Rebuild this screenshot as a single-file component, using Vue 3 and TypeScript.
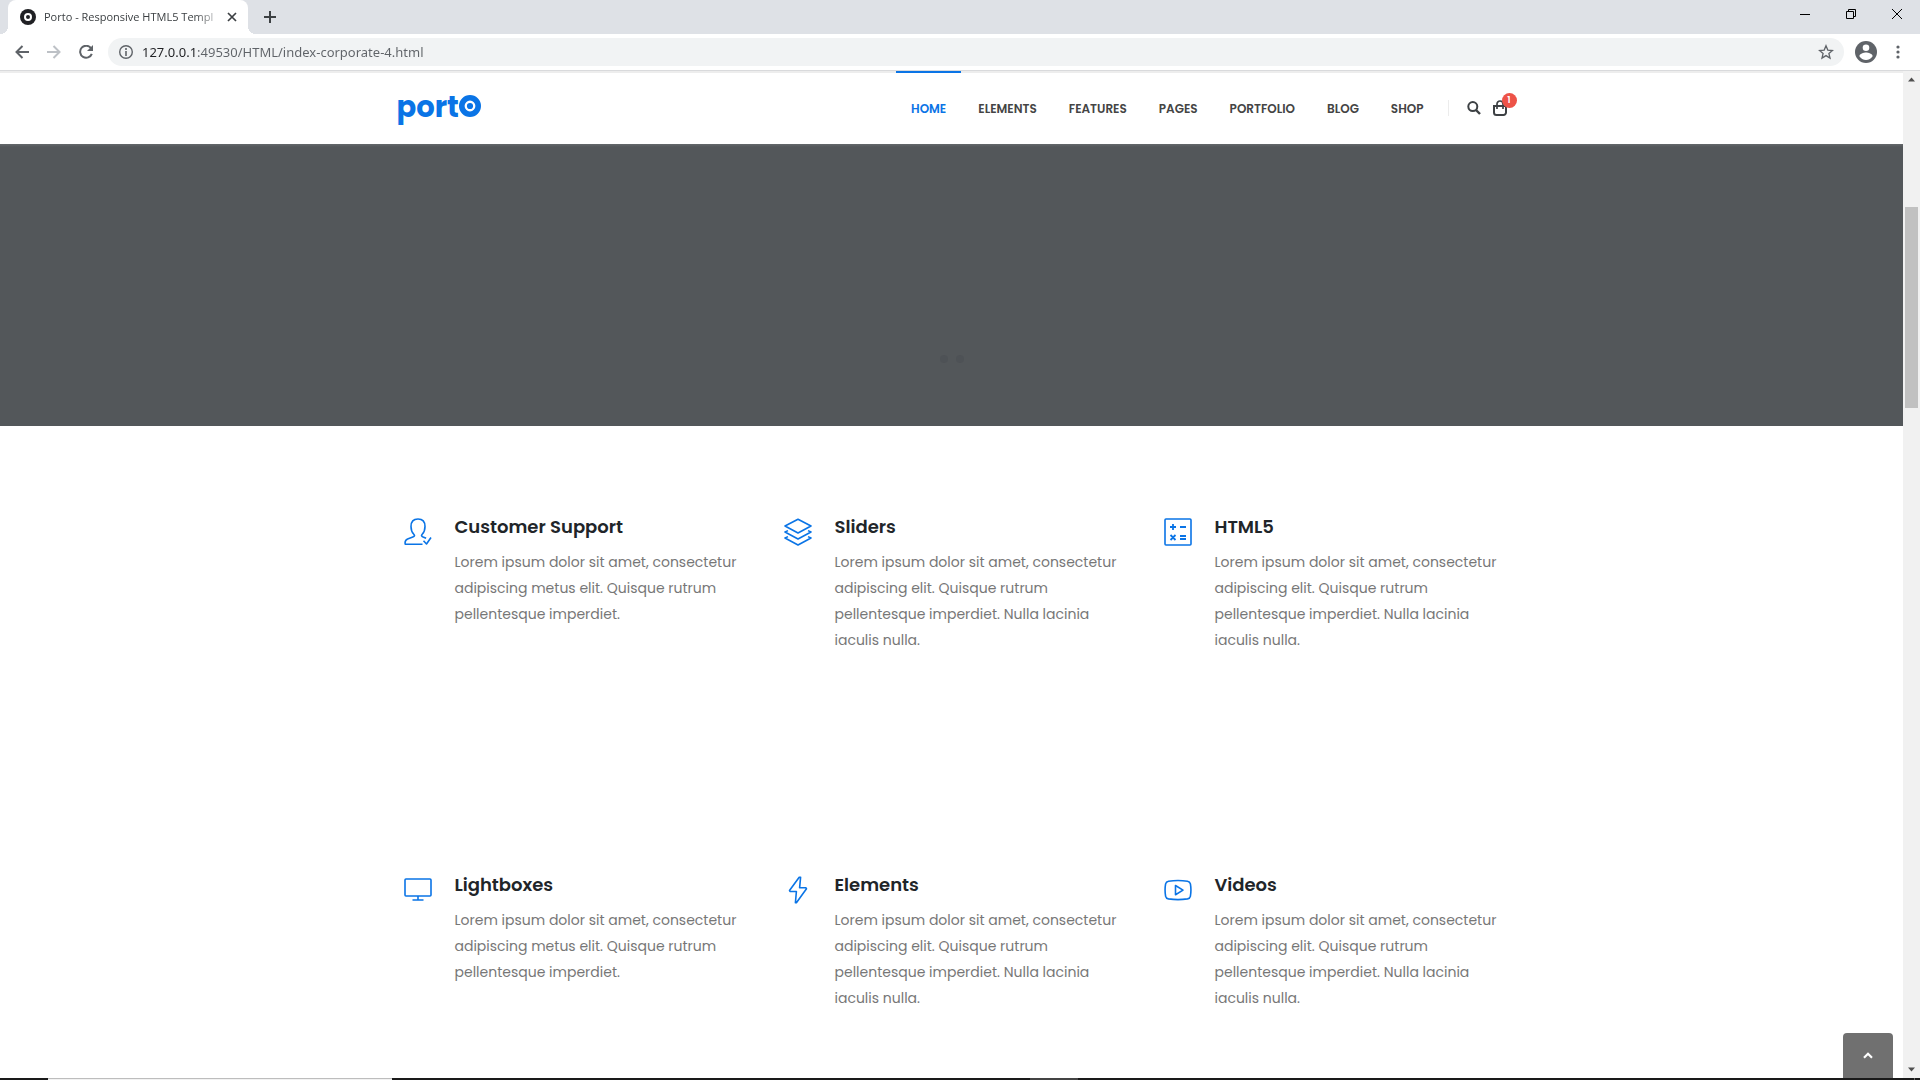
<script setup lang="ts">
interface Feature {
  icon: string
  title: string
  lines: string[]
}

const navItems: string[] = ['Home', 'Elements', 'Features', 'Pages', 'Portfolio', 'Blog', 'Shop']

const shortText: string[] = [
  'Lorem ipsum dolor sit amet, consectetur',
  'adipiscing metus elit. Quisque rutrum',
  'pellentesque imperdiet.',
]
const longText: string[] = [
  'Lorem ipsum dolor sit amet, consectetur',
  'adipiscing elit. Quisque rutrum',
  'pellentesque imperdiet. Nulla lacinia',
  'iaculis nulla.',
]

const features: Feature[] = [
  { icon: 'user', title: 'Customer Support', lines: shortText },
  { icon: 'layers', title: 'Sliders', lines: longText },
  { icon: 'calc', title: 'HTML5', lines: longText },
  { icon: 'screen', title: 'Lightboxes', lines: shortText },
  { icon: 'bolt', title: 'Elements', lines: longText },
  { icon: 'video', title: 'Videos', lines: longText },
]
</script>

<template>
  <div class="window">
    <div class="tabstrip">
      <div class="tab">
        <svg class="favicon" viewBox="0 0 16 16" aria-hidden="true">
          <circle cx="8" cy="8" r="8" fill="#202124" />
          <circle cx="8" cy="8" r="3" fill="none" stroke="#fff" stroke-width="2" />
        </svg>
        <span class="tab-title">Porto - Responsive HTML5 Templ</span>
        <button class="tab-close" type="button" aria-label="Close tab">
          <svg width="10" height="10" viewBox="0 0 10 10"><path d="M1 1l8 8M9 1l-8 8" stroke="#3c4043" stroke-width="1.700" /></svg>
        </button>
      </div>
      <button class="new-tab" type="button" aria-label="New tab">
        <svg width="12" height="12" viewBox="0 0 12 12"><path d="M6 0v12M0 6h12" stroke="#3c4043" stroke-width="2" /></svg>
      </button>
      <div class="window-buttons">
        <button type="button" aria-label="Minimize">
          <svg width="10" height="10" viewBox="0 0 10 10"><path d="M0 5.500h10" stroke="#000" /></svg>
        </button>
        <button type="button" aria-label="Restore">
          <svg width="10" height="10" viewBox="0 0 10 10" fill="none" stroke="#000"><path d="M.5 2.500h7v7h-7zM2.500 2.500v-2h7v7h-2" /></svg>
        </button>
        <button type="button" aria-label="Close">
          <svg width="10" height="10" viewBox="0 0 10 10"><path d="M0 0l10 10M10 0L0 10" stroke="#000" /></svg>
        </button>
      </div>
    </div>

    <div class="toolbar">
      <button type="button" aria-label="Back">
        <svg width="14" height="14" viewBox="0 0 14 14" fill="none" stroke="#5f6368" stroke-width="2"><path d="M14 7H2M7.500 1L1.500 7l6 6" /></svg>
      </button>
      <button type="button" aria-label="Forward">
        <svg width="14" height="14" viewBox="0 0 14 14" fill="none" stroke="#bdc1c6" stroke-width="2"><path d="M0 7h12M6.500 1l6 6-6 6" /></svg>
      </button>
      <button type="button" aria-label="Reload">
        <svg width="14" height="14" viewBox="0 0 14 14"><path d="M12 3.200A6 6 0 1 0 12.800 8.800" fill="none" stroke="#5f6368" stroke-width="2" /><path d="M14 0v6H8z" fill="#5f6368" /></svg>
      </button>
      <div class="omnibox">
        <svg width="14" height="14" viewBox="0 0 14 14" aria-hidden="true"><circle cx="7" cy="7" r="6.300" fill="none" stroke="#5f6368" stroke-width="1.400" /><path d="M7 6v5M7 3v2" stroke="#5f6368" stroke-width="1.600" /></svg>
        <input class="url" type="text" aria-label="Address" value="127.0.0.1:49530/HTML/index-corporate-4.html" />
        <button class="star" type="button" aria-label="Bookmark">
          <svg width="16" height="16" viewBox="0 0 16 16" fill="none" stroke="#5f6368" stroke-width="1.300"><path d="M8 1.800l1.800 4.300 4.700.4-3.600 3 1.100 4.600L8 11.600l-4 2.500 1.100-4.600-3.600-3 4.700-.4z" /></svg>
        </button>
      </div>
      <button class="profile" type="button" aria-label="Profile">
        <svg width="22" height="22" viewBox="0 0 22 22"><circle cx="11" cy="11" r="11" fill="#5f6368" /><circle cx="11" cy="6.800" r="3.300" fill="#fff" /><path d="M4.400 15.200c0-2.400 4.400-3.600 6.600-3.600s6.600 1.200 6.600 3.600c-1.400 2.200-3.800 3.700-6.600 3.700s-5.200-1.500-6.600-3.700z" fill="#fff" /></svg>
      </button>
      <button class="menu" type="button" aria-label="Menu">
        <svg width="4" height="14" viewBox="0 0 4 14" fill="#5f6368"><circle cx="2" cy="2" r="1.600" /><circle cx="2" cy="7" r="1.600" /><circle cx="2" cy="12" r="1.600" /></svg>
      </button>
    </div>

    <div class="viewport">
      <div class="page">
        <header class="header">
          <div class="container header-row">
            <a class="logo" href="#" aria-label="Porto">
              <span>port</span>
              <svg width="22" height="22" viewBox="0 0 22 22" aria-hidden="true"><circle cx="11" cy="11" r="8.200" fill="none" stroke="#0a74e6" stroke-width="5.600" /><circle cx="11" cy="11" r="3.100" fill="#0a74e6" /></svg>
            </a>
            <nav class="nav">
              <a v-for="(item, i) in navItems" :key="item" href="#" :class="{ active: i === 0 }">{{ item }}</a>
            </nav>
            <div class="tools">
              <button type="button" aria-label="Search">
                <svg width="14" height="14" viewBox="0 0 14 14" fill="none" stroke="#3d4144" stroke-width="2"><circle cx="5.800" cy="5.600" r="4.500" /><path d="M9 9l4 4" stroke-width="2.400" /></svg>
              </button>
              <button class="cart" type="button" aria-label="Cart">
                <svg width="14" height="16" viewBox="0 0 14 16" fill="none" stroke="#3d4144" stroke-width="2"><path d="M1 6h12v6.500a2.500 2.500 0 0 1-2.500 2.500h-7A2.500 2.500 0 0 1 1 12.500z" /><path d="M4 9V4a3 3 0 0 1 6 0v5" stroke-width="1.700" /></svg>
                <span class="badge">1</span>
              </button>
            </div>
          </div>
        </header>

        <section class="banner">
          <span class="dot"></span>
          <span class="dot"></span>
        </section>

        <main class="container features">
          <article v-for="f in features" :key="f.title" class="feature">
            <svg class="feature-icon" viewBox="0 0 28 28" aria-hidden="true">
              <template v-if="f.icon === 'user'">
                <path d="M18.500 26.200H1.200c-.5-3 .2-4.400 2.400-5.200l5.200-2c2-.8 2.100-1.600 1-2.700C7.700 14.200 7 11.800 7 8.500 7 3.600 9.800 1 14 1s7 2.600 7 7.500c0 3.300-.7 5.700-2.800 7.800-1.100 1.100-.8 1.900.9 2.700l3 1.300" />
                <path d="M19.500 22.800l3 3.200L27 19.500" />
              </template>
              <template v-else-if="f.icon === 'layers'">
                <path d="M14 1.200L27 8l-13 7L1 8z" />
                <path d="M4 12.600L1 14l13 7 13-7-3-1.400" />
                <path d="M4 18.600L1 20l13 7 13-7-3-1.400" />
              </template>
              <template v-else-if="f.icon === 'calc'">
                <rect x="1" y="1" width="26" height="26" rx="1" />
                <path d="M9 6v6M6 9h6M16 9h6M6.500 17l5 5M11.500 17l-5 5M16 18h6M16 21h6" stroke-width="1.800" />
              </template>
              <template v-else-if="f.icon === 'screen'">
                <rect x="1" y="3" width="26" height="17" rx="1" />
                <path d="M14 20v4M8.500 24h11" />
              </template>
              <template v-else-if="f.icon === 'bolt'">
                <path d="M15.200 1.200L5.500 14.500l.5 1h6.400l-1 11.200h1L22.500 12.800l-.5-1h-6.400l1-10.600z" />
              </template>
              <template v-else>
                <path d="M4.500 5.200c6-.9 13-.9 19 0 1.600.3 2.500 1.100 2.900 2.700.7 4 .7 8.300 0 12.300-.4 1.600-1.300 2.400-2.900 2.700-6 .9-13 .9-19 0-1.600-.3-2.500-1.100-2.900-2.700-.7-4-.7-8.300 0-12.300.4-1.600 1.300-2.400 2.900-2.700z" />
                <path d="M11.500 9.500v9.200l7.500-4.600z" />
              </template>
            </svg>
            <div class="feature-body">
              <h2>{{ f.title }}</h2>
              <p>{{ f.lines.join('\n') }}</p>
            </div>
          </article>
        </main>

        <button class="to-top" type="button" aria-label="Back to top">
          <svg width="10" height="7" viewBox="0 0 10 7"><path d="M1 5.800l4-4 4 4" fill="none" stroke="#fff" stroke-width="2.200" /></svg>
        </button>
      </div>

      <div class="scrollbar" aria-hidden="true">
        <svg class="arrow" viewBox="0 0 17 17"><path d="M5 10.500h7L8.500 6.500z" fill="#505050" /></svg>
        <div class="track">
          <div class="before"></div>
          <div class="thumb"></div>
          <div class="after"></div>
        </div>
        <svg class="arrow" viewBox="0 0 17 17"><path d="M5 6.500h7l-3.500 4z" fill="#505050" /></svg>
      </div>
    </div>

    <div class="taskbar" aria-hidden="true">
      <div class="start"></div>
      <div class="search"></div>
      <div class="apps"></div>
      <div class="running"></div>
      <div class="tray"></div>
    </div>
  </div>
</template>

<style>
body {
  margin: 0;
}
</style>

<style scoped>
.window {
  display: flex;
  flex-direction: column;
  height: 100vh;
  overflow: hidden;
  background: #fff;
  font-family: 'Noto Sans', 'Open Sans', sans-serif;
}
button {
  display: flex;
  align-items: center;
  justify-content: center;
  padding: 0;
  border: 0;
  background: none;
}
svg {
  display: block;
  flex: none;
}

.tabstrip {
  display: flex;
  height: 34px;
  background: #dee1e6;
}
.tab {
  position: relative;
  display: flex;
  align-items: center;
  box-sizing: border-box;
  width: 240px;
  margin-left: 8px;
  padding: 0 8px 0 12px;
  border-radius: 8px 8px 0 0;
  background: #fff;
}
.tab::before,
.tab::after {
  content: '';
  position: absolute;
  bottom: 0;
  width: 8px;
  height: 8px;
}
.tab::before {
  right: 100%;
  background: radial-gradient(circle at 0 0, #dee1e6 8px, #fff 8px);
}
.tab::after {
  left: 100%;
  background: radial-gradient(circle at 100% 0, #dee1e6 8px, #fff 8px);
}
.favicon {
  width: 16px;
  height: 16px;
}
.tab-title {
  flex: 1;
  margin-left: 8px;
  white-space: nowrap;
  font-family: 'Open Sans', 'Noto Sans', sans-serif;
  font-size: 11px;
  line-height: 16px;
  color: #3c4043;
  -webkit-mask-image: linear-gradient(to right, #000 84%, transparent);
  mask-image: linear-gradient(to right, #000 84%, transparent);
}
.tab-close {
  width: 16px;
  height: 16px;
}
.new-tab {
  width: 28px;
  margin-left: 8px;
}
.window-buttons {
  display: flex;
  height: 28px;
  margin-left: auto;
}
.window-buttons button {
  width: 46px;
}

.toolbar {
  display: flex;
  align-items: center;
  height: 36px;
  padding: 0 8px 0 6px;
  border-bottom: 1px solid #d9dadc;
  background: #fff;
}
.toolbar > button {
  width: 32px;
  height: 28px;
}
.omnibox {
  display: flex;
  flex: 1;
  align-items: center;
  height: 28px;
  margin-left: 6px;
  padding: 0 10px 0 11px;
  border-radius: 14px;
  background: #f1f3f4;
}
.url {
  flex: 1;
  min-width: 0;
  margin: 0 9px;
  padding: 0;
  border: 0;
  outline: 0;
  background: linear-gradient(to right, #202124 54px, #5f6368 54px);
  -webkit-background-clip: text;
  background-clip: text;
  color: transparent;
  font: 13px/20px 'Noto Sans', 'Open Sans', sans-serif;
}
.toolbar > .profile {
  width: 22px;
  margin-left: 11px;
}
.toolbar > .menu {
  width: 28px;
  margin-left: 7px;
}

.viewport {
  display: flex;
  flex: 1;
  min-height: 0;
}
.page {
  position: relative;
  flex: 1;
  overflow: hidden;
  font-family: Poppins, Inter, 'Open Sans', sans-serif;
}
.container {
  box-sizing: border-box;
  max-width: 1140px;
  margin: 0 auto;
}
.header {
  position: relative;
  box-sizing: border-box;
  height: 73px;
  border-top: 2px solid #ededed;
  background: #fff;
}
.header-row {
  display: flex;
  align-items: center;
  height: 70px;
  padding: 0 15px;
}
.logo {
  display: flex;
  align-items: baseline;
  padding-bottom: 2px;
  color: #0a74e6;
  font: 700 29px/28px Poppins, Roboto, sans-serif;
  text-decoration: none;
}
.nav {
  display: flex;
  align-self: stretch;
  gap: 2px;
  margin-left: auto;
}
.nav a {
  position: relative;
  padding: 0 15px;
  font-size: 12px;
  font-weight: 600;
  line-height: 72px;
  color: #444;
  text-transform: uppercase;
  text-decoration: none;
}
.nav a.active {
  color: #0a74e6;
}
.nav a.active::before {
  content: '';
  position: absolute;
  top: -2px;
  left: 0;
  right: 0;
  height: 2px;
  background: #0a74e6;
}
.tools {
  display: flex;
  align-items: center;
  gap: 12px;
  margin-left: 9px;
  padding-left: 19px;
  background: linear-gradient(#ececec, #ececec) left center / 1px 16px no-repeat;
}
.cart {
  position: relative;
}
.badge {
  position: absolute;
  top: -7px;
  left: 9px;
  width: 15px;
  height: 15px;
  border-radius: 50%;
  background: #ed5348;
  color: #fff;
  font: 600 9px/14px Poppins, sans-serif;
  text-align: center;
}

.banner {
  display: flex;
  align-items: flex-end;
  justify-content: center;
  gap: 8px;
  box-sizing: border-box;
  height: 282px;
  padding-bottom: 63px;
  background: linear-gradient(#64686b, #53575a 3px);
}
.dot {
  width: 8px;
  height: 8px;
  border-radius: 50%;
  background: #4e5256;
}

.features {
  display: grid;
  grid-template-columns: repeat(3, 1fr);
  row-gap: 218px;
  padding-top: 87px;
}
.feature {
  display: flex;
  gap: 23px;
  padding-left: 22px;
}
.feature-icon {
  width: 28px;
  height: 28px;
  margin-top: 5px;
  fill: none;
  stroke: #0a74e6;
  stroke-width: 1.600;
  stroke-linejoin: round;
}
.feature h2 {
  margin: 0 0 8px;
  font-size: 18px;
  font-weight: 600;
  line-height: 28px;
  color: #212529;
}
.feature p {
  margin: 0;
  font-size: 14px;
  font-weight: 400;
  line-height: 26px;
  white-space: pre;
  color: #777;
}
.to-top {
  position: absolute;
  right: 10px;
  bottom: 0;
  width: 50px;
  height: 45px;
  border-radius: 4px 4px 0 0;
  background: #707070;
}

.scrollbar {
  display: flex;
  flex-direction: column;
  width: 17px;
  background: #f1f1f1;
}
.arrow {
  width: 17px;
  height: 17px;
}
.track {
  display: flex;
  flex: 1;
  flex-direction: column;
  padding: 0 2px;
}
.before {
  flex: 119;
}
.thumb {
  flex: 201;
  background: #c1c1c1;
}
.after {
  flex: 653;
}

.taskbar {
  display: flex;
  height: 2px;
  background: #1a1a1a;
}
.start {
  width: 48px;
}
.search {
  box-sizing: border-box;
  width: 344px;
  border-top: 1px solid #bdbdbd;
  background: #f2f2f2;
}
.apps {
  width: 638px;
}
.running {
  width: 48px;
  background: #444;
}
.tray {
  flex: 1;
  margin-right: 5px;
  border-right: 1px solid #666;
}
</style>
